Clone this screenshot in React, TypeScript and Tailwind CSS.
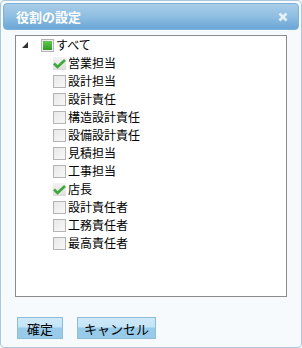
import React, { useState } from 'react';

const ROLES = [
  { name: '営業担当', checked: true },
  { name: '設計担当', checked: false },
  { name: '設計責任', checked: false },
  { name: '構造設計責任', checked: false },
  { name: '設備設計責任', checked: false },
  { name: '見積担当', checked: false },
  { name: '工事担当', checked: false },
  { name: '店長', checked: true },
  { name: '設計責任者', checked: false },
  { name: '工務責任者', checked: false },
  { name: '最高責任者', checked: false },
];

const CheckBox: React.FC<{ state: 'on' | 'off' | 'partial'; onClick?: () => void }> = ({ state, onClick }) => {
  if (state === 'on') {
    return (
      <span onClick={onClick} className="w-[13px] h-[13px] flex items-center justify-center bg-gradient-to-b from-[#f4f4f4] to-[#dcdcdc]">
        <svg width="13" height="13" viewBox="0 0 13 13">
          <path d="M1 6.5l3.5 3.5L12 3" fill="none" stroke="#3fa83a" strokeWidth="2.6" />
        </svg>
      </span>
    );
  }
  return (
    <span onClick={onClick} className="w-[13px] h-[13px] border border-[#b4b4b4] bg-gradient-to-br from-[#e8e8e8] to-[#f8f8f8] flex items-center justify-center">
      {state === 'partial' && (
        <span className="w-[9px] h-[9px] bg-gradient-to-b from-[#62c94f] to-[#2f9a23]" />
      )}
    </span>
  );
};

const App: React.FC = () => {
  const [roles, setRoles] = useState(ROLES);
  const toggle = (i: number) => setRoles(roles.map((r, j) => (j === i ? { ...r, checked: !r.checked } : r)));

  return (
    <div
      className="w-[302px] h-[348px] bg-[#f6fafc] border border-[#a9c8de] rounded-[4px] p-[2px] flex flex-col"
      style={{ fontFamily: '"MS UI Gothic", "Noto Sans CJK JP", sans-serif' }}
    >
      {/* Title */}
      <div className="h-[27px] rounded-[4px] border border-[#7fb0d8] bg-gradient-to-b from-[#a9cde8] via-[#8ebee2] to-[#6aa6d6] flex items-center justify-between pl-[12px] pr-[10px]">
        <span className="text-white text-[13px] font-bold leading-none">役割の設定</span>
        <svg width="10" height="10" viewBox="0 0 10 10">
          <path d="M1.5 1.5l7 7M8.5 1.5l-7 7" stroke="#e8f0f6" strokeWidth="2.6" />
        </svg>
      </div>

      {/* Tree */}
      <div className="mt-[5px] ml-[12px] mr-[12px] h-[262px] border border-[#8c8c8c] bg-white pt-0">
        <div className="flex items-center h-[18px] pl-[5px]">
          <svg width="8" height="8" viewBox="0 0 8 8" className="mr-[12px]">
            <path d="M7 1L7 7L1 7Z" fill="#333" />
          </svg>
          <CheckBox state="partial" />
          <span className="ml-[2px] text-[12px] text-black leading-none">すべて</span>
        </div>
        {roles.map((r, i) => (
          <div key={r.name} className="flex items-center h-[18px] pl-[37px]">
            <CheckBox state={r.checked ? 'on' : 'off'} onClick={() => toggle(i)} />
            <span className="ml-[2px] text-[12px] text-black leading-none">{r.name}</span>
          </div>
        ))}
      </div>

      {/* Buttons */}
      <div className="flex gap-[14px] ml-[14px] mt-[20px]">
        <button className="w-[46px] h-[22px] border border-[#8fbcd6] bg-[linear-gradient(to_bottom,#cde9f9_0%,#c4e4f7_45%,#98cbea_50%,#98cbea_100%)] text-[13px] text-black leading-none">
          確定
        </button>
        <button className="w-[79px] h-[22px] border border-[#8fbcd6] bg-[linear-gradient(to_bottom,#cde9f9_0%,#c4e4f7_45%,#98cbea_50%,#98cbea_100%)] text-[13px] text-black leading-none">
          キャンセル
        </button>
      </div>
    </div>
  );
};

export default App;
